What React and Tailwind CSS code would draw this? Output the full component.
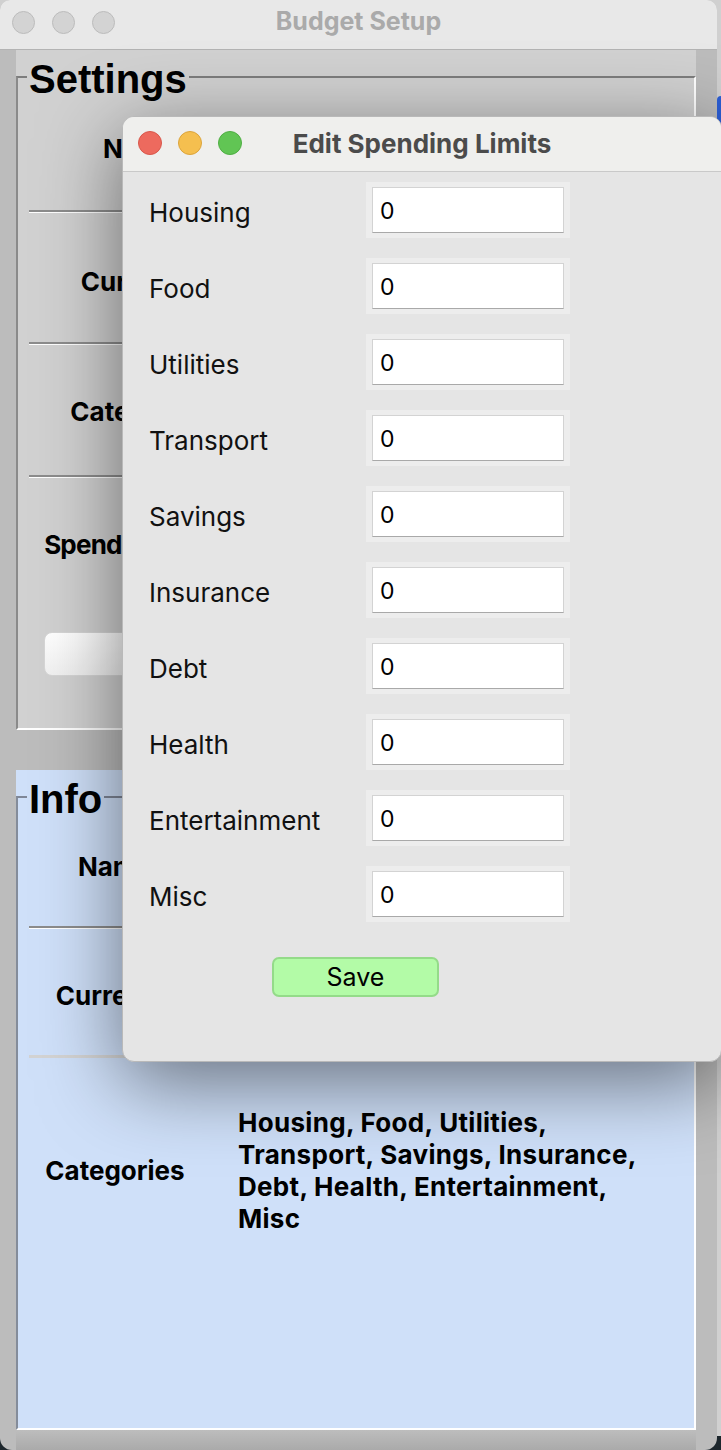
import React from "react";

const LIMITS = [
  "Housing",
  "Food",
  "Utilities",
  "Transport",
  "Savings",
  "Insurance",
  "Debt",
  "Health",
  "Entertainment",
  "Misc",
];

const legendFont = "font-['Liberation_Sans',Arial,sans-serif]";

function Groove({ light }) {
  if (light) return <div className="h-[3px] bg-[#d3d3d3]" />;
  return <div className="h-[3px] border-t-2 border-[#8c8c8c] bg-white" />;
}

function EditLimitsDialog() {
  return (
    <div className="absolute left-[122px] top-[116px] w-[600px] overflow-hidden rounded-[12px] border border-[#b9b9b9] bg-[#e5e5e5] shadow-[0_20px_80px_rgba(0,0,0,0.5)]">
      {/* title bar */}
      <div className="flex h-[55px] items-center border-b border-[#c9c9c9] bg-[#efefed] px-[15px] pb-[2px]">
        <div className="flex w-[104px] gap-[16px]">
          <span className="h-[24px] w-[24px] rounded-full border border-[#d9574b] bg-[#ed6a5e]" />
          <span className="h-[24px] w-[24px] rounded-full border border-[#dca43b] bg-[#f5bf4f]" />
          <span className="h-[24px] w-[24px] rounded-full border border-[#4fae43] bg-[#61c554]" />
        </div>
        <div className="flex-1 text-center text-[26px] font-bold text-[#4b4b4b]">
          Edit Spending Limits
        </div>
        <div className="w-[104px]" />
      </div>

      <div className="flex flex-col pt-[10px] pb-[64px]">
        <div className="flex flex-col gap-[20px]">
          {LIMITS.map((name) => (
            <div key={name} className="flex h-[56px] items-center">
              <div className="w-[243px] pl-[26px] pt-[4px] text-[26px] text-[#111111]">{name}</div>
              <div className="h-[56px] w-[204px] bg-[#ededed] px-[6px] py-[5px]">
                <input
                  readOnly
                  value="0"
                  className="h-full w-full border border-[#d3d3d3] border-b-[#a9a9a9] bg-white pl-[7px] pt-[2px] text-[23px] text-black outline-none"
                />
              </div>
            </div>
          ))}
        </div>
        <button className="ml-[149px] mt-[35px] h-[40px] w-[167px] rounded-[7px] border-2 border-[#94db89] bg-[#b3fba7] text-[25px] leading-none text-black">
          Save
        </button>
      </div>
    </div>
  );
}

export default function App() {
  return (
    <div className="relative h-[1450px] w-[721px] overflow-hidden bg-[linear-gradient(to_bottom,#d0d0d0_1436px,#1d272d_1436px)] font-['Inter',sans-serif]">
      <div className="absolute right-0 top-[96px] h-[38px] w-[4px] rounded-l-full bg-[#2c5fd6]" />

      <div className="flex h-full w-[717px] flex-col overflow-hidden rounded-t-[10px] rounded-b-[12px] bg-[#bcbcbc]">
        {/* window title bar */}
        <div className="flex h-[50px] shrink-0 items-center border-b border-[#b3b3b3] bg-[#e8e8e8] pb-[5px] pl-[12px]">
          <div className="flex w-[110px] gap-[17px]">
            <span className="h-[23px] w-[23px] rounded-full border border-[#bcbcbc] bg-[#d3d3d3]" />
            <span className="h-[23px] w-[23px] rounded-full border border-[#bcbcbc] bg-[#d3d3d3]" />
            <span className="h-[23px] w-[23px] rounded-full border border-[#bcbcbc] bg-[#d3d3d3]" />
          </div>
          <div className="flex-1 text-center text-[25px] font-bold text-[#aaaaaa]">Budget Setup</div>
          <div className="w-[122px]" />
        </div>

        <div className="flex flex-1 flex-col pl-[16px] pr-[21px]">
          {/* Settings */}
          <div className="h-[680px] bg-[#d1d1d1] pt-[5px]">
            <fieldset className="h-[675px] border-2 border-t-[#7d7d7d] border-l-[#8a8a8a] border-r-white border-b-white">
              <legend className={`ml-[9px] px-[2px] pt-[4px] text-[40px] leading-[40px] font-bold text-black ${legendFont}`}>
                Settings
              </legend>
              <div className="mx-[11px] flex flex-col text-[26px] font-bold text-black">
                <div className="flex h-[111px] items-center pb-[12px]">
                  <div className="w-[222px] text-center leading-[30px]">Name</div>
                  <input readOnly className="h-[40px] w-[380px] bg-white" />
                </div>
                <Groove />
                <div className="flex h-[129px] items-center pt-[9px]">
                  <div className="w-[222px] text-center leading-[30px]">Currency</div>
                  <div className="h-[40px] w-[200px] rounded-[6px] bg-white" />
                </div>
                <Groove />
                <div className="flex h-[130px] items-center pt-[4px]">
                  <div className="w-[222px] text-center leading-[30px]">Categories</div>
                  <input readOnly className="h-[40px] w-[380px] bg-white" />
                </div>
                <Groove />
                <div className="flex h-[134px] items-center">
                  <div className="w-[222px] text-center leading-[30px] tracking-[-0.8px]">Spending Limits</div>
                </div>
                <button className="ml-[15px] mt-[20px] h-[44px] w-[624px] rounded-[8px] border border-[#d6d6d6] bg-[linear-gradient(to_bottom,#ffffff,#f1f1f1)] text-[22px] font-normal">
                  Edit Spending Limits
                </button>
              </div>
            </fieldset>
          </div>

          {/* Info */}
          <div className="mt-[40px] h-[660px] bg-[#cfe0f9] pt-[5px]">
            <fieldset className="h-[655px] border-2 border-t-[#7f8797] border-l-[#848c9a] border-r-white border-b-white">
              <legend className={`ml-[9px] px-[2px] pt-[4px] text-[40px] leading-[40px] font-bold text-black ${legendFont}`}>
                Info
              </legend>
              <div className="mx-[11px] flex flex-col text-[26px] font-bold text-black">
                <div className="flex h-[107px] items-center pb-[12px]">
                  <div className="w-[172px] text-center leading-[30px]">Name</div>
                </div>
                <Groove />
                <div className="flex h-[126px] items-center pt-[7px]">
                  <div className="w-[172px] text-center leading-[30px]">Currency</div>
                  <div className="ml-[37px] leading-[30px]">USD</div>
                </div>
                <Groove light />
                <div className="flex items-center pt-[49px]">
                  <div className="w-[172px] text-center leading-[30px]">Categories</div>
                  <div className="ml-[37px] leading-[32px] tracking-[0.3px]">
                    Housing, Food, Utilities,
                    <br />
                    Transport, Savings, Insurance,
                    <br />
                    Debt, Health, Entertainment,
                    <br />
                    Misc
                  </div>
                </div>
              </div>
            </fieldset>
          </div>

          <div className="flex-1 bg-[linear-gradient(to_bottom,#bdbdbd,#aaaaaa)]" />
        </div>
      </div>

      <EditLimitsDialog />
    </div>
  );
}
